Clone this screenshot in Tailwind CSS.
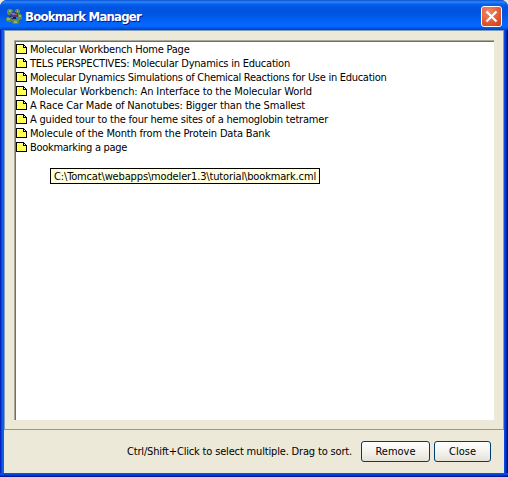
<!DOCTYPE html>
<html lang="en">
<head>
<meta charset="utf-8">
<title>Bookmark Manager</title>
<script src="https://cdn.jsdelivr.net/npm/@tailwindcss/browser@4"></script>
</head>
<body class="w-[508px] h-[477px] overflow-hidden bg-[#ece9d8] font-['DejaVu_Sans_Condensed','DejaVu_Sans',sans-serif] text-[11px] text-black">
<div class="w-[508px] h-[477px] flex flex-col rounded-t-[7px] overflow-hidden bg-[linear-gradient(90deg,#0010a8_0,#0831d9_1px,#0855dd_2px,#166aee_3px,#0855dd_4px,#0855dd_504px,#0048e8_505px,#0030c8_506px,#001590_507px,#00108a_508px)]">
  <header class="h-[30px] shrink-0 flex items-center pl-[6px] pr-[6px] bg-[linear-gradient(180deg,#0a4fd0_0,#2b87fb_2px,#0a62ee_4px,#0054e3_7px,#0054e0_13px,#0260f5_20px,#0468ff_26px,#0256e8_28px,#003dc4_30px)]">
    <svg class="w-4 h-4 mt-px" viewBox="0 0 16 16" shape-rendering="crispEdges">
      <path d="M2 1h4v1h1v4H6v1H2V6H1V2h1zM10 1h3v1h1v3h-1v1h-3V5H9V2h1zM1 9h4v1h1v3H5v1H1v-1H0v-3h1zM12 6h3v1h1v4h-1v1h-3v-1h-1V7h1zM7 11h5v1h1v3h-1v1H7v-1H6v-3h1z" fill="#5d8a50"/>
      <path d="M3 2h2v2H3zM11 2h1v2h-1zM1 10h3v2H1zM13 7h2v2h-2zM8 13h3v2H8z" fill="#8fb46e"/>
      <path d="M6 4h4v1h2v5h-2v1H5v-1H3V8h1V6h2z" fill="#453c84"/>
      <path d="M6 5h3v2H6z" fill="#7078c0"/>
      <path d="M4 9h3v1H4zM10 9h2v1h-2zM9 6h2v1H9z" fill="#a86450"/>
      <path d="M7 9h3v2H7zM4 8h1v1H4z" fill="#211c30"/>
    </svg>
    <h1 class="ml-[3px] mt-[3px] h-[20px] leading-[20px] whitespace-nowrap text-white font-bold text-[13px] [text-shadow:1px_1px_0_#0a1883]"><span data-width="116">Bookmark Manager</span></h1>
    <button class="ml-auto mt-[3px] w-[21px] h-[21px] shrink-0 rounded-[3px] border border-white bg-[radial-gradient(circle_at_35%_25%,#f08a68_0%,#e2572f_60%,#c63c12_100%)] flex items-center justify-center" aria-label="Close window">
      <svg class="w-[13px] h-[13px]" viewBox="0 0 13 13"><path d="M1.500 1.500L11.500 11.500M11.500 1.500L1.500 11.500" stroke="#fff" stroke-width="2.200"/></svg>
    </button>
  </header>
  <main class="mx-1 h-[400px] shrink-0 bg-[#ece9d8] border border-[#7f9db9] pl-[9px] pt-[9px]">
    <div class="w-[480px] h-[380px] border-t border-l border-[#aca899]">
      <ul id="bookmarks" class="w-full h-full bg-white border-t border-l border-[#716f64]"></ul>
    </div>
  </main>
  <footer class="mx-1 h-[43px] shrink-0 bg-[#ece9d8] flex items-center justify-end pr-[13px]">
    <span class="mr-[9px] mt-px whitespace-nowrap" data-width="225">Ctrl/Shift+Click to select multiple. Drag to sort.</span>
    <button class="w-[69px] h-[21px] mr-1 rounded-[3px] border border-[#003c74] bg-linear-to-b from-white via-[#f4f3ee] to-[#e6e2d8] flex items-center justify-center"><span class="pt-px" data-width="40">Remove</span></button>
    <button class="w-[57px] h-[21px] rounded-[3px] border border-[#003c74] bg-linear-to-b from-white via-[#f4f3ee] to-[#e6e2d8] flex items-center justify-center"><span class="pt-px" data-width="27">Close</span></button>
  </footer>
  <div class="h-1 shrink-0 bg-[linear-gradient(180deg,#0855dd_0,#0044e0_2px,#0020b0_3px,#001080_4px)]"></div>
</div>
<div class="absolute left-[50px] top-[168px] w-[270px] h-[16px] border border-black bg-[#ffffe1] pl-[3px] leading-[15px] whitespace-nowrap"><span data-width="262">C:\Tomcat\webapps\modeler1.3\tutorial\bookmark.cml</span></div>
<script>
  var bookmarks = [
    ['Molecular Workbench Home Page', 159.5],
    ['TELS PERSPECTIVES: Molecular Dynamics in Education', 260],
    ['Molecular Dynamics Simulations of Chemical Reactions for Use in Education', 356.5],
    ['Molecular Workbench: An Interface to the Molecular World', 282],
    ['A Race Car Made of Nanotubes: Bigger than the Smallest', 275],
    ['A guided tour to the four heme sites of a hemoglobin tetramer', 298],
    ['Molecule of the Month from the Protein Data Bank', 240],
    ['Bookmarking a page', 97]
  ];
  // Page outline with a folded corner and a dithered yellow fill.
  var pageIcon = '<svg class="w-[11px] h-[10px] mr-[3px] shrink-0" viewBox="0 0 11 10">' +
    '<path d="M0 0h8v1h1v1h1v1h1v7H0z" fill="#000"/><path d="M1 1h6v3h3v5H1z" fill="#fff"/><path d="M8 2h1v1H8z" fill="#fff"/>' +
    '<path d="M1 1.500h6M2 2.500h5M1 3.500h6M2 4.500h8M1 5.500h9M2 6.500h8M1 7.500h9M2 8.500h8" stroke="#ffff48" stroke-dasharray="1 1"/></svg>';
  document.getElementById('bookmarks').innerHTML = bookmarks.map(function (b) {
    return '<li class="flex h-[14px] items-center">' + pageIcon +
      '<span class="leading-[14px] mt-[2px] whitespace-nowrap" data-width="' + b[1] + '">' + b[0] + '</span></li>';
  }).join('');

  // Track each label so its line occupies its nominal width.
  function fit() {
    document.querySelectorAll('[data-width]').forEach(function (el) {
      el.style.letterSpacing = '0px';
      var natural = el.getBoundingClientRect().width;
      el.style.letterSpacing = (el.dataset.width - natural) / el.textContent.length + 'px';
    });
  }
  window.addEventListener('load', fit);
  new ResizeObserver(fit).observe(document.body);
</script>
</body>
</html>
